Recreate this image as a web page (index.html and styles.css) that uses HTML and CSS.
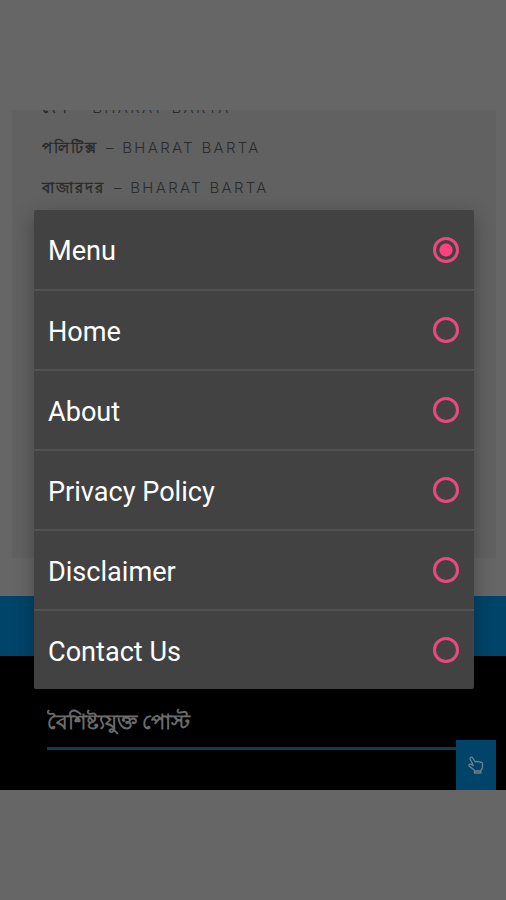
FILE: index.html
```html
<!DOCTYPE html>
<html lang="bn">
<head>
    <meta charset="UTF-8">
    <meta name="viewport" content="width=device-width, initial-scale=1.0">
    <title>Bharat Barta</title>
    <link rel="stylesheet" href="styles.css">
</head>
<body>
    <div class="screen">
        <div class="content">
            <ul class="feed-list">
                <li><span class="bn bn-1">দেশ</span><span class="site">– BHARAT BARTA</span></li>
                <li><span class="bn bn-2">পলিটিক্স</span><span class="site">– BHARAT BARTA</span></li>
                <li><span class="bn bn-3">বাজারদর</span><span class="site">– BHARAT BARTA</span></li>
            </ul>
        </div>
        <div class="bar"></div>
        <footer class="footer">
            <h3 class="footer-title"><span>বৈশিষ্ট্যযুক্ত পোস্ট</span></h3>
            <button class="pointer-btn" aria-label="Top">
                <svg width="18" height="20" viewBox="0 0 18 20" fill="none" stroke="#71808a" stroke-width="1.3" stroke-linejoin="round" stroke-linecap="round">
                    <path d="M6.3 10.5 3.2 4.3C2.6 2.5 4.6 1.3 5.7 3L8.3 7C9 6 10.4 6.1 10.9 7C11.7 6.2 12.9 6.5 13.3 7.4C14.4 7 15.5 7.7 15.5 8.9V12.2C15.5 13.8 14 14.7 13.8 16H7.8C7.4 14.3 4.2 12.8 2.3 11.2C1.2 9.9 2.8 8.6 4 9.3L6.3 10.5Z"/>
                    <path d="M7.5 16.2V18H13.8V16.2"/>
                </svg>
            </button>
        </footer>
    </div>

    <div class="dialog" role="listbox">
        <div class="option"><span>Menu</span><i class="radio checked"></i></div>
        <div class="option"><span>Home</span><i class="radio"></i></div>
        <div class="option"><span>About</span><i class="radio"></i></div>
        <div class="option"><span>Privacy Policy</span><i class="radio"></i></div>
        <div class="option"><span>Disclaimer</span><i class="radio"></i></div>
        <div class="option"><span>Contact Us</span><i class="radio"></i></div>
    </div>
</body>
</html>
```
FILE: styles.css
```css
* {
    box-sizing: border-box;
}
body {
    margin: 0;
    height: 900px;
    padding-top: 110px;
    background: #666;
    position: relative;
    overflow: hidden;
    font-family: Roboto, "Noto Sans", sans-serif;
}
.content {
    height: 448px;
    margin: 0 10px 38px 12px;
    background: #616161;
    overflow: hidden;
}
.feed-list {
    list-style: none;
    margin: -23px 0 0;
    padding: 0 0 0 30px;
}
.feed-list li {
    display: flex;
    align-items: center;
    height: 40px;
    color: #2b2b2b;
    white-space: nowrap;
}
.bn {
    padding-top: 2px;
    font-size: 15px;
    font-weight: 700;
    letter-spacing: 1.9px;
}
.bn-1 {
    width: 34px;
}
.bn-2 {
    width: 64px;
}
.bn-3 {
    width: 72px;
}
.site {
    font-family: Inter, sans-serif;
    font-size: 15px;
    font-weight: 300;
    letter-spacing: 2.3px;
}
.bar {
    height: 60px;
    background: #004469;
}
.footer {
    height: 134px;
    padding: 46px 10px 0 47px;
    background: #000;
    position: relative;
}
.footer-title {
    height: 48px;
    margin: 0;
    border-bottom: 3px solid #0e3d52;
    color: #6b6b6b;
    font-size: 21.4px;
    line-height: 40px;
    white-space: nowrap;
}
.pointer-btn {
    position: absolute;
    right: 10px;
    bottom: 0;
    width: 40px;
    height: 50px;
    padding: 0;
    border: none;
    background: #004469;
}
.pointer-btn svg {
    display: block;
    margin: 0 auto;
}
.dialog {
    position: absolute;
    left: 34px;
    top: 210px;
    width: 440px;
    height: 479px;
    background: #424242;
    border-radius: 2px;
    box-shadow: 0 6px 20px rgba(0, 0, 0, 0.3);
}
.option {
    display: flex;
    align-items: center;
    justify-content: space-between;
    height: 80px;
    padding: 0 15px 0 14px;
    border-bottom: 2px solid #535353;
    color: #fff;
    font-size: 27.1px;
}
.option span {
    padding-top: 3px;
}
.option:first-child {
    height: 81px;
}
.option:last-child {
    height: 78px;
    border-bottom: none;
}
.radio {
    width: 26px;
    height: 26px;
    border: 3px solid #e84a80;
    border-radius: 50%;
}
.radio.checked {
    background: radial-gradient(circle, #ff4081 6px, transparent 7px);
}
```
